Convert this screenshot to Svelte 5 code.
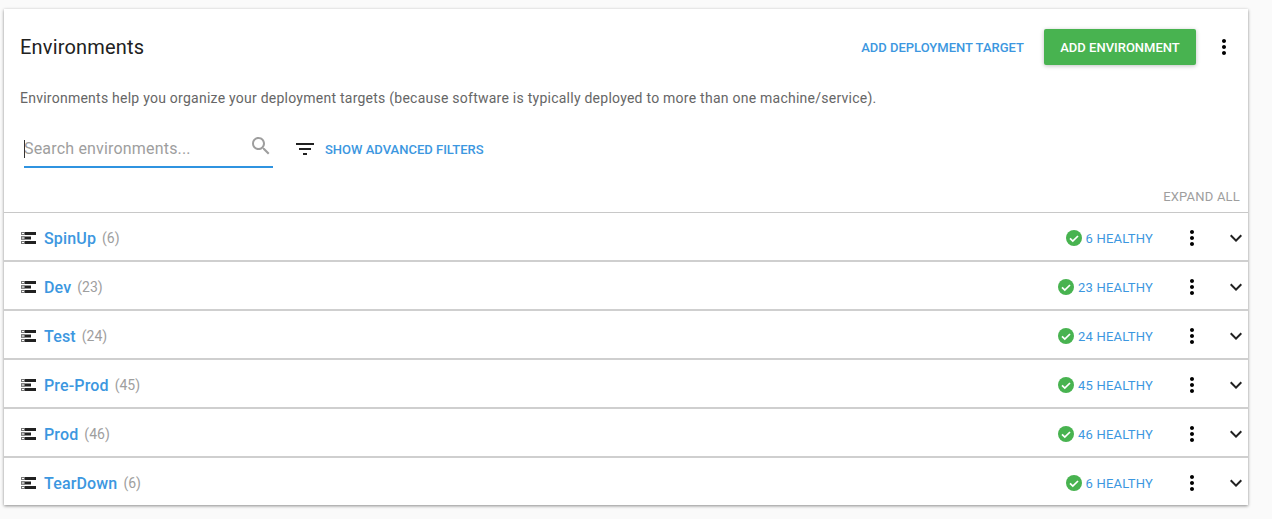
<script>
  const environments = [
    { name: 'SpinUp', count: 6 },
    { name: 'Dev', count: 23 },
    { name: 'Test', count: 24 },
    { name: 'Pre-Prod', count: 45 },
    { name: 'Prod', count: 46 },
    { name: 'TearDown', count: 6 }
  ];
</script>

<div class="page">
  <div class="card">
    <div class="header">
      <h1>Environments</h1>
      <div class="actions">
        <span class="link-button">ADD DEPLOYMENT TARGET</span>
        <span class="primary">ADD ENVIRONMENT</span>
        <span class="overflow">
          <svg viewBox="0 0 24 24" width="24" height="24"><path d="M12 8c1.1 0 2-.9 2-2s-.9-2-2-2-2 .9-2 2 .9 2 2 2zm0 2c-1.1 0-2 .9-2 2s.9 2 2 2 2-.9 2-2-.9-2-2-2zm0 6c-1.1 0-2 .9-2 2s.9 2 2 2 2-.9 2-2-.9-2-2-2z"/></svg>
        </span>
      </div>
    </div>

    <p class="intro">Environments help you organize your deployment targets (because software is typically deployed to more than one machine/service).</p>

    <div class="filters">
      <div class="search">
        <span class="caret"></span>
        <span class="placeholder">Search environments...</span>
        <svg class="search-icon" viewBox="0 0 24 24" width="24" height="24"><path d="M15.5 14h-.79l-.28-.27C15.41 12.59 16 11.11 16 9.5 16 5.91 13.09 3 9.5 3S3 5.91 3 9.5 5.91 16 9.5 16c1.61 0 3.09-.59 4.23-1.57l.27.28v.79l5 4.99L20.49 19l-4.99-5zm-6 0C7.01 14 5 11.99 5 9.5S7.01 5 9.5 5 14 7.01 14 9.5 11.99 14 9.5 14z"/></svg>
      </div>
      <svg class="filter-icon" viewBox="0 0 24 24" width="24" height="24"><path d="M10 18h4v-2h-4v2zM3 6v2h18V6H3zm3 7h12v-2H6v2z"/></svg>
      <span class="advanced">SHOW ADVANCED FILTERS</span>
    </div>

    <div class="expand-row"><span>EXPAND ALL</span></div>

    <div class="list">
      {#each environments as env}
        <div class="row">
          <svg class="env-icon" viewBox="0 0 15 12" width="15" height="12">
            <path d="M0 0h15v3H0zM0 9h15v3H0z" fill="#212121"/>
            <path d="M0 4.5h10v3H0z" fill="#212121"/>
            <path d="M0 0h4v3H0zM0 4.5h4v3H0zM0 9h4v3H0z" fill="#777"/>
            <path d="M1 1h2v1H1zM1 5.5h2v1H1zM1 10h2v1H1z" fill="#fff"/>
          </svg>
          <span class="name">{env.name}</span>
          <span class="count">({env.count})</span>
          <span class="health">
            <svg viewBox="0 0 24 24" width="16" height="16"><circle cx="12" cy="12" r="12" fill="#48b350"/><path d="M6 12.5l4.2 4.2L18 9" fill="none" stroke="#fff" stroke-width="2.6"/></svg>
            <span>{env.count} HEALTHY</span>
          </span>
          <span class="dots">
            <svg viewBox="0 0 24 24" width="24" height="24"><path d="M12 8c1.1 0 2-.9 2-2s-.9-2-2-2-2 .9-2 2 .9 2 2 2zm0 2c-1.1 0-2 .9-2 2s.9 2 2 2 2-.9 2-2-.9-2-2-2zm0 6c-1.1 0-2 .9-2 2s.9 2 2 2 2-.9 2-2-.9-2-2-2z"/></svg>
          </span>
          <span class="chevron">
            <svg viewBox="0 0 24 24" width="24" height="24"><path d="M16.59 8.59L12 13.17 7.41 8.59 6 10l6 6 6-6z" fill="#212121"/></svg>
          </span>
        </div>
      {/each}
    </div>
  </div>
</div>

<style>
  :global(body) {
    margin: 0;
    background: #fafafa;
  }
  .page {
    box-sizing: border-box;
    min-height: 519px;
    padding: 9px 24px 0 4px;
    font-family: Roboto, sans-serif;
    color: #333;
  }
  .card {
    background: #fff;
    box-shadow: 0 1px 3px rgba(0, 0, 0, 0.45);
  }
  .header {
    display: flex;
    align-items: center;
    justify-content: space-between;
    padding: 20px 12px 0 16px;
  }
  h1 {
    margin: 0;
    font-size: 20px;
    font-weight: 400;
    letter-spacing: 0.18px;
    color: #212121;
  }
  .actions {
    display: flex;
    align-items: center;
  }
  .link-button {
    font-size: 13px;
    font-weight: 500;
    color: #3c97e0;
    margin-right: 20px;
  }
  .primary {
    display: flex;
    align-items: center;
    justify-content: center;
    width: 152px;
    height: 36px;
    background: #48b350;
    color: #fff;
    font-size: 13px;
    font-weight: 500;
    border-radius: 2px;
    box-shadow: 0 1px 4px rgba(0, 0, 0, 0.25);
  }
  .overflow {
    display: flex;
    margin-left: 16px;
    color: #000;
  }
  .intro {
    margin: 23px 0 0;
    padding-left: 16px;
    font-size: 14px;
    line-height: 20px;
    letter-spacing: 0.245px;
    color: #666;
  }
  .filters {
    display: flex;
    align-items: center;
    margin-top: 20px;
    padding-left: 20px;
  }
  .search {
    position: relative;
    display: flex;
    align-items: center;
    width: 249px;
    height: 40px;
    border-bottom: 2px solid #2f93e0;
    box-sizing: border-box;
  }
  .caret {
    position: absolute;
    left: 0;
    top: 12px;
    width: 1px;
    height: 18px;
    background: #333;
  }
  .placeholder {
    padding-top: 2px;
    font-size: 16px;
    letter-spacing: 0.18px;
    color: #9e9e9e;
  }
  .search-icon {
    position: absolute;
    right: 0;
    top: 6px;
    fill: #9e9e9e;
  }
  .filter-icon {
    margin: 2px 0 0 20px;
    fill: #212121;
  }
  .advanced {
    margin: 3px 0 0 8px;
    font-size: 13px;
    font-weight: 500;
    color: #3c97e0;
  }
  .expand-row {
    display: flex;
    justify-content: flex-end;
    padding: 21px 8px 8px 0;
    font-size: 13px;
    line-height: 15px;
    letter-spacing: 0.2px;
    color: #9e9e9e;
  }
  .row {
    display: flex;
    align-items: center;
    box-sizing: border-box;
    height: 48px;
    padding: 3px 0 0 17px;
    border-top: 1px solid #c8c8c8;
  }
  .row + .row {
    height: 49px;
    border-top: 2px solid #cfcfcf;
  }
  .env-icon {
    margin-right: 8px;
  }
  .name {
    font-size: 16px;
    font-weight: 500;
    letter-spacing: 0.15px;
    color: #3c97e0;
  }
  .count {
    margin-left: 6px;
    font-size: 14px;
    color: #9e9e9e;
  }
  .health {
    display: flex;
    align-items: center;
    gap: 4px;
    margin-left: auto;
    font-size: 13px;
    letter-spacing: 0.2px;
    color: #3c97e0;
  }
  .dots {
    display: flex;
    margin-left: 27px;
    color: #000;
  }
  .chevron {
    display: flex;
    margin-left: 20px;
  }
</style>
